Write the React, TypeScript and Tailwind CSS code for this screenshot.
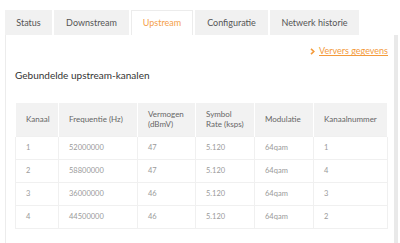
export default function App() {
  const tabs = [
    { label: "Status", w: "w-[47px]" },
    { label: "Downstream", w: "w-[75px]" },
    { label: "Upstream", w: "w-[62px]", active: true },
    { label: "Configuratie", w: "w-[73px]" },
    { label: "Netwerk historie", w: "w-[89px]" },
  ]

  const rows = [
    ["1", "52000000", "47", "5.120", "64qam", "1"],
    ["2", "58800000", "47", "5.120", "64qam", "4"],
    ["3", "36000000", "46", "5.120", "64qam", "3"],
    ["4", "44500000", "46", "5.120", "64qam", "2"],
  ]

  const cols = ["w-[43px]", "w-[79px]", "w-[58px]", "w-[59px]", "w-[59px]", "w-[74px]"]

  return (
    <div className="w-[400px] h-[243px] bg-white overflow-hidden font-['Lato','Open_Sans',sans-serif]">
      {/* Tabs */}
      <div className="flex gap-[2px] pl-[5px] pt-[10px]">
        {tabs.map((t) => (
          <div
            key={t.label}
            className={`${t.w} h-[25px] flex items-center justify-center text-[9px] ${
              t.active
                ? "bg-white text-[#f5a04a] border-t border-x border-[#ececec]"
                : "bg-[#f1f1f1] text-[#555]"
            }`}
          >
            {t.label}
          </div>
        ))}
      </div>

      {/* Panel */}
      <div className="flex h-[208px]">
        <div className="w-[388px] ml-[5px] border-l border-[#ececec] pl-[9px] pr-[5px]">
          <div className="flex justify-end items-center pt-[8px] h-[24px] text-[9px] text-[#f39a3b]">
            <svg width="5" height="7" viewBox="0 0 5 7" className="mr-[4px]">
              <path d="M1 0.8 L3.8 3.5 L1 6.2" fill="none" stroke="#f39a3b" strokeWidth="1.6" />
            </svg>
            <span className="underline">Ververs gegevens</span>
          </div>
          <h2 className="mt-[9px] text-[10px] text-[#333] leading-[14px]">Gebundelde upstream-kanalen</h2>
          <table className="mt-[21px] border-collapse text-[7.5px] text-[#9a9a9a]">
            <thead>
              <tr className="bg-[#f2f2f2] h-[33px] text-[8px] text-[#666] leading-[10px]">
                {["Kanaal", "Frequentie (Hz)", "Vermogen (dBmV)", "Symbol Rate (ksps)", "Modulatie", "Kanaalnummer"].map(
                  (h, i) => (
                    <th
                      key={h}
                      className={`${cols[i]} font-normal text-left align-middle pl-[10px] pr-[2px] border-x border-white`}
                    >
                      {h === "Vermogen (dBmV)" ? (
                        <>
                          Vermogen
                          <br />
                          (dBmV)
                        </>
                      ) : h === "Symbol Rate (ksps)" ? (
                        <>
                          Symbol
                          <br />
                          Rate (ksps)
                        </>
                      ) : (
                        h
                      )}
                    </th>
                  )
                )}
              </tr>
            </thead>
            <tbody>
              {rows.map((r) => (
                <tr key={r[0]} className="h-[23px]">
                  {r.map((c, i) => (
                    <td key={i} className="pl-[10px] border border-[#f0f0f0] align-middle">
                      {c}
                    </td>
                  ))}
                </tr>
              ))}
            </tbody>
          </table>
        </div>
        <div className="w-[4px] ml-[1px] bg-[#e9e9e9]"></div>
      </div>
    </div>
  )
}
